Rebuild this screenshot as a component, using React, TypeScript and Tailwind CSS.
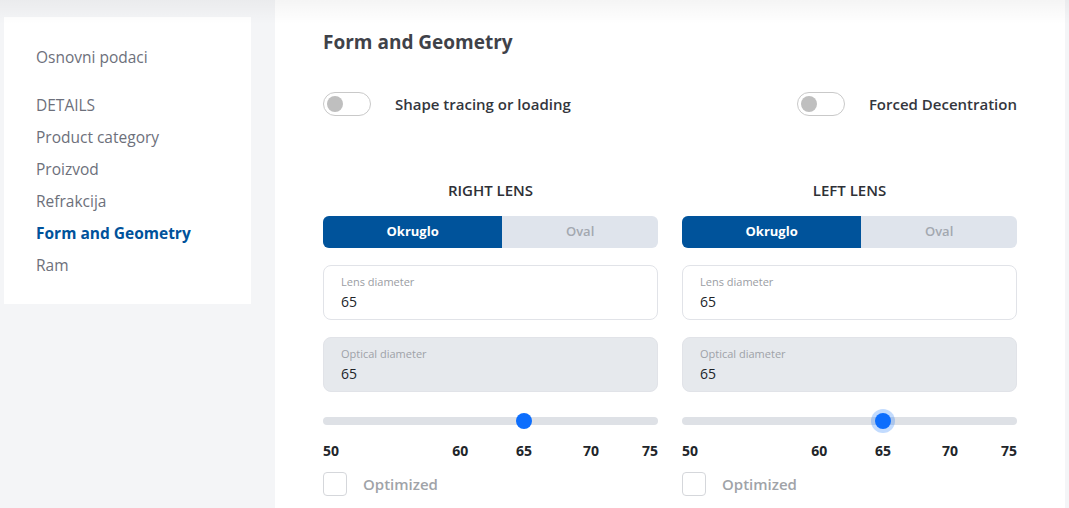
import { useState } from 'react';

const sideItems = ['Product category', 'Proizvod', 'Refrakcija', 'Form and Geometry', 'Ram'];

const ticks = [
  { v: '50', left: '0%', align: 'left' },
  { v: '60', left: '41%', align: 'center' },
  { v: '65', left: '60%', align: 'center' },
  { v: '70', left: '80%', align: 'center' },
  { v: '75', left: '100%', align: 'right' },
];

function Toggle({ label }: { label: string }) {
  return (
    <div className="flex items-center">
      <div className="w-12 h-6 rounded-full border border-[#c9c9c9] bg-white flex items-center pl-[3px]">
        <div className="w-4 h-4 rounded-full bg-[#bfbfbf]" />
      </div>
      <span className="ml-6 text-[15px] font-semibold text-[#33363d]">{label}</span>
    </div>
  );
}

function LensColumn({ title, focused }: { title: string; focused?: boolean }) {
  const [shape, setShape] = useState<'round' | 'oval'>('round');
  const value = 65;
  const pct = ((value - 50) / 25) * 100;

  return (
    <div className="flex-1 flex flex-col">
      <div className="text-center text-[15px] font-semibold text-[#2e3036] leading-5 mt-16">{title}</div>

      <div className="mt-4 flex h-8 rounded-md overflow-hidden bg-[#dfe4ec] text-[13px] font-bold">
        <button
          onClick={() => setShape('round')}
          className={shape === 'round' ? 'w-[53.5%] bg-[#00539b] text-white' : 'w-[53.5%] text-[#a3a8b0]'}
        >
          Okruglo
        </button>
        <button
          onClick={() => setShape('oval')}
          className={shape === 'oval' ? 'flex-1 bg-[#00539b] text-white' : 'flex-1 text-[#a3a8b0] font-semibold'}
        >
          Oval
        </button>
      </div>

      <div className="mt-[17px] h-[55px] rounded-lg border border-[#e1e3e8] bg-white px-[17px] pt-[9px]">
        <div className="text-[11px] leading-[14px] text-[#9a9da3]">Lens diameter</div>
        <div className="text-[14px] leading-5 mt-[3px] text-[#212529]">65</div>
      </div>

      <div className="mt-[17px] h-[55px] rounded-lg border border-[#e1e3e8] bg-[#e6e9ed] px-[17px] pt-[9px]">
        <div className="text-[11px] leading-[14px] text-[#9ea2a8]">Optical diameter</div>
        <div className="text-[14px] leading-5 mt-[3px] text-[#212529]">65</div>
      </div>

      <div className="mt-[21px] relative h-4 flex items-center">
        <div className="w-full h-2 rounded-full bg-[#dee1e6]" />
        <div
          className={
            focused
              ? 'absolute top-0 w-4 h-4 -ml-2 rounded-full bg-[#0d6efd] ring-4 ring-[#0d6efd]/25'
              : 'absolute top-0 w-4 h-4 -ml-2 rounded-full bg-[#0d6efd]'
          }
          style={{ left: `${pct}%` }}
        />
      </div>

      <div className="mt-3 relative h-5 text-[14px] font-bold text-[#212529] leading-5">
        {ticks.map((t) => (
          <span
            key={t.v}
            className="absolute top-0"
            style={{
              left: t.left,
              transform:
                t.align === 'center' ? 'translateX(-50%)' : t.align === 'right' ? 'translateX(-100%)' : 'none',
            }}
          >
            {t.v}
          </span>
        ))}
      </div>

      <label className="mt-[11px] flex items-center">
        <span className="w-6 h-6 rounded border border-[#d5d7db] bg-white" />
        <span className="ml-4 text-[15px] font-semibold text-[#a0a3a8]">Optimized</span>
      </label>
    </div>
  );
}

export default function App() {
  return (
    <div
      className="relative min-h-screen flex bg-[#f4f5f7] overflow-hidden"
      style={{ fontFamily: '"Open Sans", "Noto Sans", sans-serif' }}
    >
      <div className="absolute inset-x-0 top-0 h-6 bg-gradient-to-b from-black/[0.04] to-transparent pointer-events-none z-10" />

      <aside className="w-[275px] shrink-0 pl-1 pt-[17px]">
        <div className="w-[247px] bg-white pl-8 pt-[25px] pb-[22px]">
          <div className="h-8 flex items-center text-[15.5px] text-[#6d707b]">Osnovni podaci</div>
          <div className="mt-4 h-8 flex items-center text-[15.5px] text-[#6d707b]">DETAILS</div>
          {sideItems.map((item) => (
            <div
              key={item}
              className={
                item === 'Form and Geometry'
                  ? 'h-8 flex items-center text-[15.5px] font-bold text-[#00529b]'
                  : 'h-8 flex items-center text-[15.5px] text-[#6d707b]'
              }
            >
              {item}
            </div>
          ))}
        </div>
      </aside>

      <main className="flex-1 mr-[4px] bg-white px-12 pt-7">
        <h1 className="text-[19px] leading-7 font-bold text-[#3f4249]">Form and Geometry</h1>

        <div className="mt-9 flex">
          <div className="flex-1">
            <Toggle label="Shape tracing or loading" />
          </div>
          <div className="flex-1 flex justify-end">
            <Toggle label="Forced Decentration" />
          </div>
        </div>

        <div className="flex gap-6">
          <LensColumn title="RIGHT LENS" />
          <LensColumn title="LEFT LENS" focused />
        </div>
      </main>
    </div>
  );
}
